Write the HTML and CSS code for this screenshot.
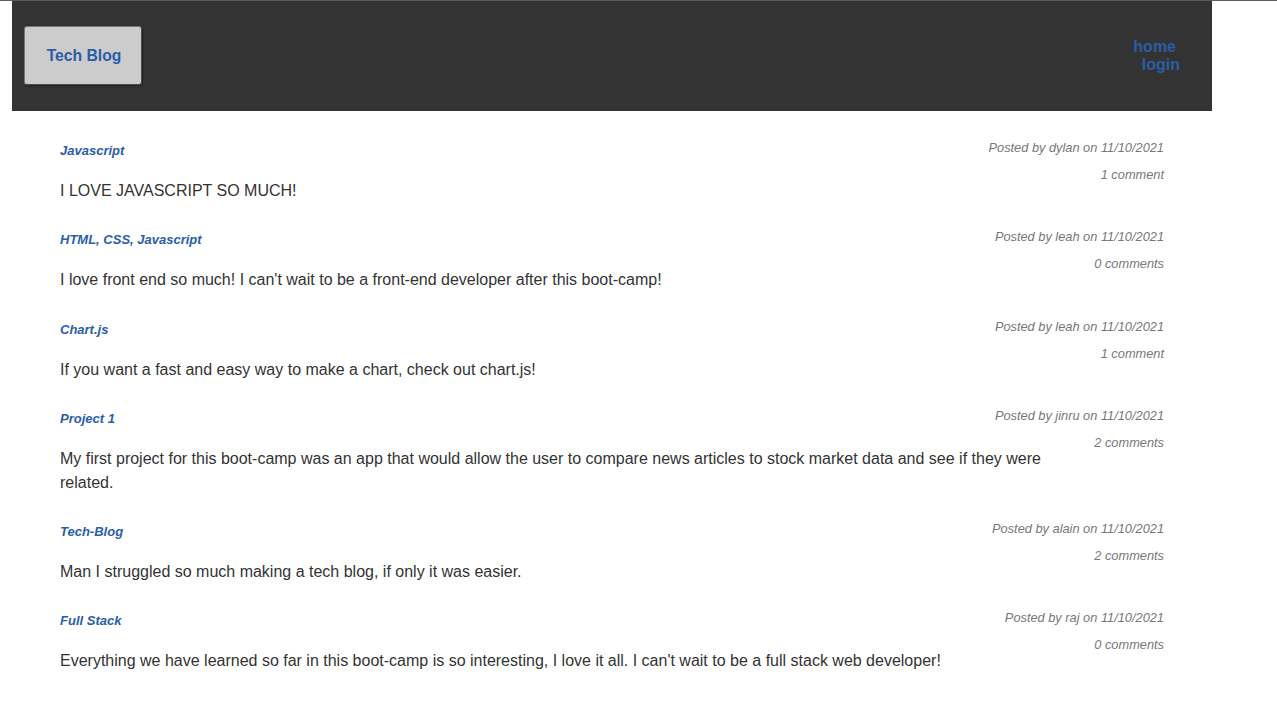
FILE: index.html
```html
<!DOCTYPE html>
<html lang="en">
<head>
<meta charset="utf-8">
<title>Tech Blog</title>
<link rel="stylesheet" href="styles.css">
</head>
<body>
<header class="site-header">
  <a class="brand" href="#">Tech Blog</a>
  <nav class="nav">
    <a class="nav-link nav-home" href="#">home</a>
    <a class="nav-link" href="#">login</a>
  </nav>
</header>
<main class="posts">
  <article class="post">
    <a class="post-title" href="#">Javascript</a>
    <div class="post-meta"><p>Posted by dylan on 11/10/2021</p><p>1 comment</p></div>
    <p class="post-body">I LOVE JAVASCRIPT SO MUCH!</p>
  </article>
  <article class="post">
    <a class="post-title" href="#">HTML, CSS, Javascript</a>
    <div class="post-meta"><p>Posted by leah on 11/10/2021</p><p>0 comments</p></div>
    <p class="post-body">I love front end so much! I can't wait to be a front-end developer after this boot-camp!</p>
  </article>
  <article class="post">
    <a class="post-title" href="#">Chart.js</a>
    <div class="post-meta"><p>Posted by leah on 11/10/2021</p><p>1 comment</p></div>
    <p class="post-body">If you want a fast and easy way to make a chart, check out chart.js!</p>
  </article>
  <article class="post">
    <a class="post-title" href="#">Project 1</a>
    <div class="post-meta"><p>Posted by jinru on 11/10/2021</p><p>2 comments</p></div>
    <p class="post-body">My first project for this boot-camp was an app that would allow the user to compare news articles to stock market data and see if they were related.</p>
  </article>
  <article class="post">
    <a class="post-title" href="#">Tech-Blog</a>
    <div class="post-meta"><p>Posted by alain on 11/10/2021</p><p>2 comments</p></div>
    <p class="post-body">Man I struggled so much making a tech blog, if only it was easier.</p>
  </article>
  <article class="post">
    <a class="post-title" href="#">Full Stack</a>
    <div class="post-meta"><p>Posted by raj on 11/10/2021</p><p>0 comments</p></div>
    <p class="post-body">Everything we have learned so far in this boot-camp is so interesting, I love it all. I can't wait to be a full stack web developer!</p>
  </article>
</main>
</body>
</html>
```

FILE: styles.css
```css
html {
  border-top: 1px solid #5c5c5c;
}
body {
  margin: 0 12px;
  font-family: "Liberation Sans", Arial, sans-serif;
  color: #333;
  background: #fff;
}
.site-header {
  width: 1200px;
  height: 110px;
  box-sizing: border-box;
  background: #333;
  display: flex;
  align-items: center;
  justify-content: space-between;
  padding: 0 32px 0 12px;
}
.brand {
  box-sizing: border-box;
  width: 118px;
  height: 59px;
  margin-top: -1px;
  display: flex;
  align-items: center;
  justify-content: center;
  background: #ccc;
  border: 1px solid #777;
  border-right-color: #4a4a4a;
  border-bottom-color: #4a4a4a;
  border-radius: 3px;
  box-shadow: 1px 1px 2px #222;
  color: #2a5ea6;
  font-weight: bold;
  font-size: 15.7px;
  padding-left: 2px;
  text-decoration: none;
}
.nav {
  display: flex;
  flex-direction: column;
  align-items: flex-end;
  margin-top: -1px;
}
.nav-link {
  color: #2a5ea6;
  font-weight: bold;
  font-size: 16px;
  line-height: 18px;
  text-decoration: none;
}
.nav-home {
  margin-right: 4px;
}
.posts {
  width: 1200px;
  box-sizing: border-box;
  padding: 29px 48px 20px;
  display: flex;
  flex-direction: column;
  gap: 26.25px;
}
.post {
  display: grid;
  grid-template-columns: 1fr auto;
  grid-template-rows: auto auto;
}
.post-title {
  grid-row: 1;
  grid-column: 1;
  align-self: start;
  margin: 3px 0 0;
  padding-bottom: 21px;
  color: #2a5ea6;
  font-weight: bold;
  font-style: italic;
  font-size: 13px;
  line-height: 15px;
  text-decoration: none;
}
.post-meta {
  grid-row: 1 / 3;
  grid-column: 2;
  align-self: start;
  text-align: right;
  color: #777;
  font-style: italic;
  font-size: 12.8px;
  line-height: 15px;
  display: flex;
  flex-direction: column;
  gap: 12px;
}
.post-meta p {
  margin: 0;
}
.post-body {
  grid-row: 2;
  grid-column: 1 / -1;
  margin: 0;
  padding-right: 100px;
  font-size: 16px;
  line-height: 24px;
}
```
